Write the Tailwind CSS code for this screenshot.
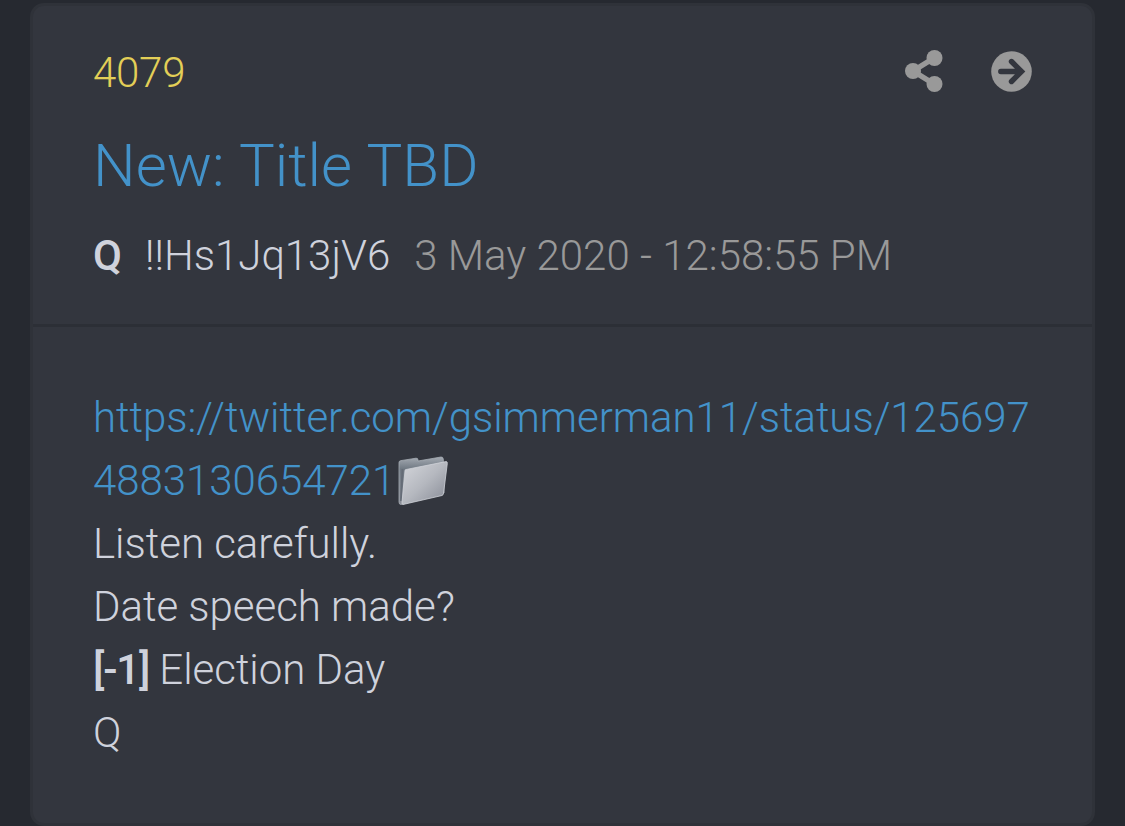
<!DOCTYPE html>
<html lang="en">
<head>
  <meta charset="UTF-8" />
  <title>4079 - New: Title TBD</title>
  <script src="https://cdn.jsdelivr.net/npm/@tailwindcss/browser@4"></script>
</head>
<body class="h-screen overflow-hidden bg-[#262930] px-[30px] pt-[3px] font-['Roboto',sans-serif] text-[42px] leading-[63px] font-light tracking-[-0.04px] text-[#cfd2dc]">
  <article class="h-[823px] w-[1065px] rounded-[14px] border-[3px] border-[#2f3239] bg-[#33363e]">
    <header class="h-[321px] border-b-[3px] border-[#2c2f36] px-[60px] pt-[35px]">
      <div class="flex items-center justify-between">
        <a href="#" class="tracking-[-0.25px] text-[#e3cf57]">4079</a>
        <div class="flex items-center gap-[48px] pr-[0.5px] pb-[3px] text-[#999]">
          <svg class="h-[42px] w-[38px]" viewBox="0 0 38 42" fill="currentColor">
            <path d="M8 21 29 8M8 21 29 34" stroke="currentColor" stroke-width="5.500" />
            <circle cx="8" cy="21" r="8" />
            <circle cx="29.500" cy="8" r="8" />
            <circle cx="29.500" cy="34" r="8" />
          </svg>
          <svg class="size-[41px]" viewBox="0 0 41 41" fill="none">
            <circle cx="20.500" cy="20.500" r="20.300" fill="#999" />
            <path d="M9.800 20.500H29M20.500 10.500l10 10-10 10" stroke="#33363e" stroke-width="5.400" stroke-linecap="round" stroke-linejoin="miter" />
          </svg>
        </div>
      </div>
      <h1 class="mt-[25px] text-[60px] leading-[73px] tracking-normal [word-spacing:1px]"><a href="#" class="text-[#4392c9]">New: Title TBD</a></h1>
      <div class="mt-[22px] flex tracking-normal">
        <strong class="mr-[24px] font-medium tracking-[-1px]">Q</strong>
        <span class="mr-[24px]">!!Hs1Jq13jV6</span>
        <time class="text-[#999]">3 May 2020 - 12:58:55 PM</time>
      </div>
    </header>

    <div class="px-[60px] pt-[59px]">
      <p class="break-all"><a href="#" class="text-[#4392c9]">https://twitter.com/gsimmerman11/status/1256974883130654721</a><svg class="ml-[2px] inline-block h-[50px] w-[52px] align-[-11px]" viewBox="0 0 52 50">
          <defs>
            <linearGradient id="front" x1="0" y1="0" x2="1" y2="1">
              <stop offset="0" stop-color="#d5d7dc" />
              <stop offset=".5" stop-color="#b5b8bf" />
              <stop offset="1" stop-color="#858994" />
            </linearGradient>
            <linearGradient id="back" x1="0" y1="0" x2="0" y2="1">
              <stop offset="0" stop-color="#a5abb3" />
              <stop offset=".25" stop-color="#707983" />
              <stop offset="1" stop-color="#8b8f98" />
            </linearGradient>
          </defs>
          <path d="M2 6.500Q2 5 3.500 4.700L19 2.200Q21 2 21 4V5L44 1Q46 .8 46.300 3L47 37 4 48.500Q2 48.500 2 46Z" fill="url(#back)" stroke="#a7adb5" stroke-width=".8" />
          <path d="M5.500 13 4 45" fill="none" stroke="#656c77" stroke-width="2" />
          <path d="M8 14.500Q8 13.700 9 13.500L49 5.600Q50.500 5.400 50.300 7.500L46.500 37.500Q46.300 39 45 39.500L6 48.500Q4.700 48.500 5 46.500Z" fill="url(#front)" stroke="#cfd2d8" stroke-width=".8" />
        </svg></p>
      <p>Listen carefully.</p>
      <p>Date speech made?</p>
      <p><strong class="font-medium tracking-[-1.2px]">[-1]</strong> Election Day</p>
      <p>Q</p>
    </div>
  </article>
</body>
</html>
